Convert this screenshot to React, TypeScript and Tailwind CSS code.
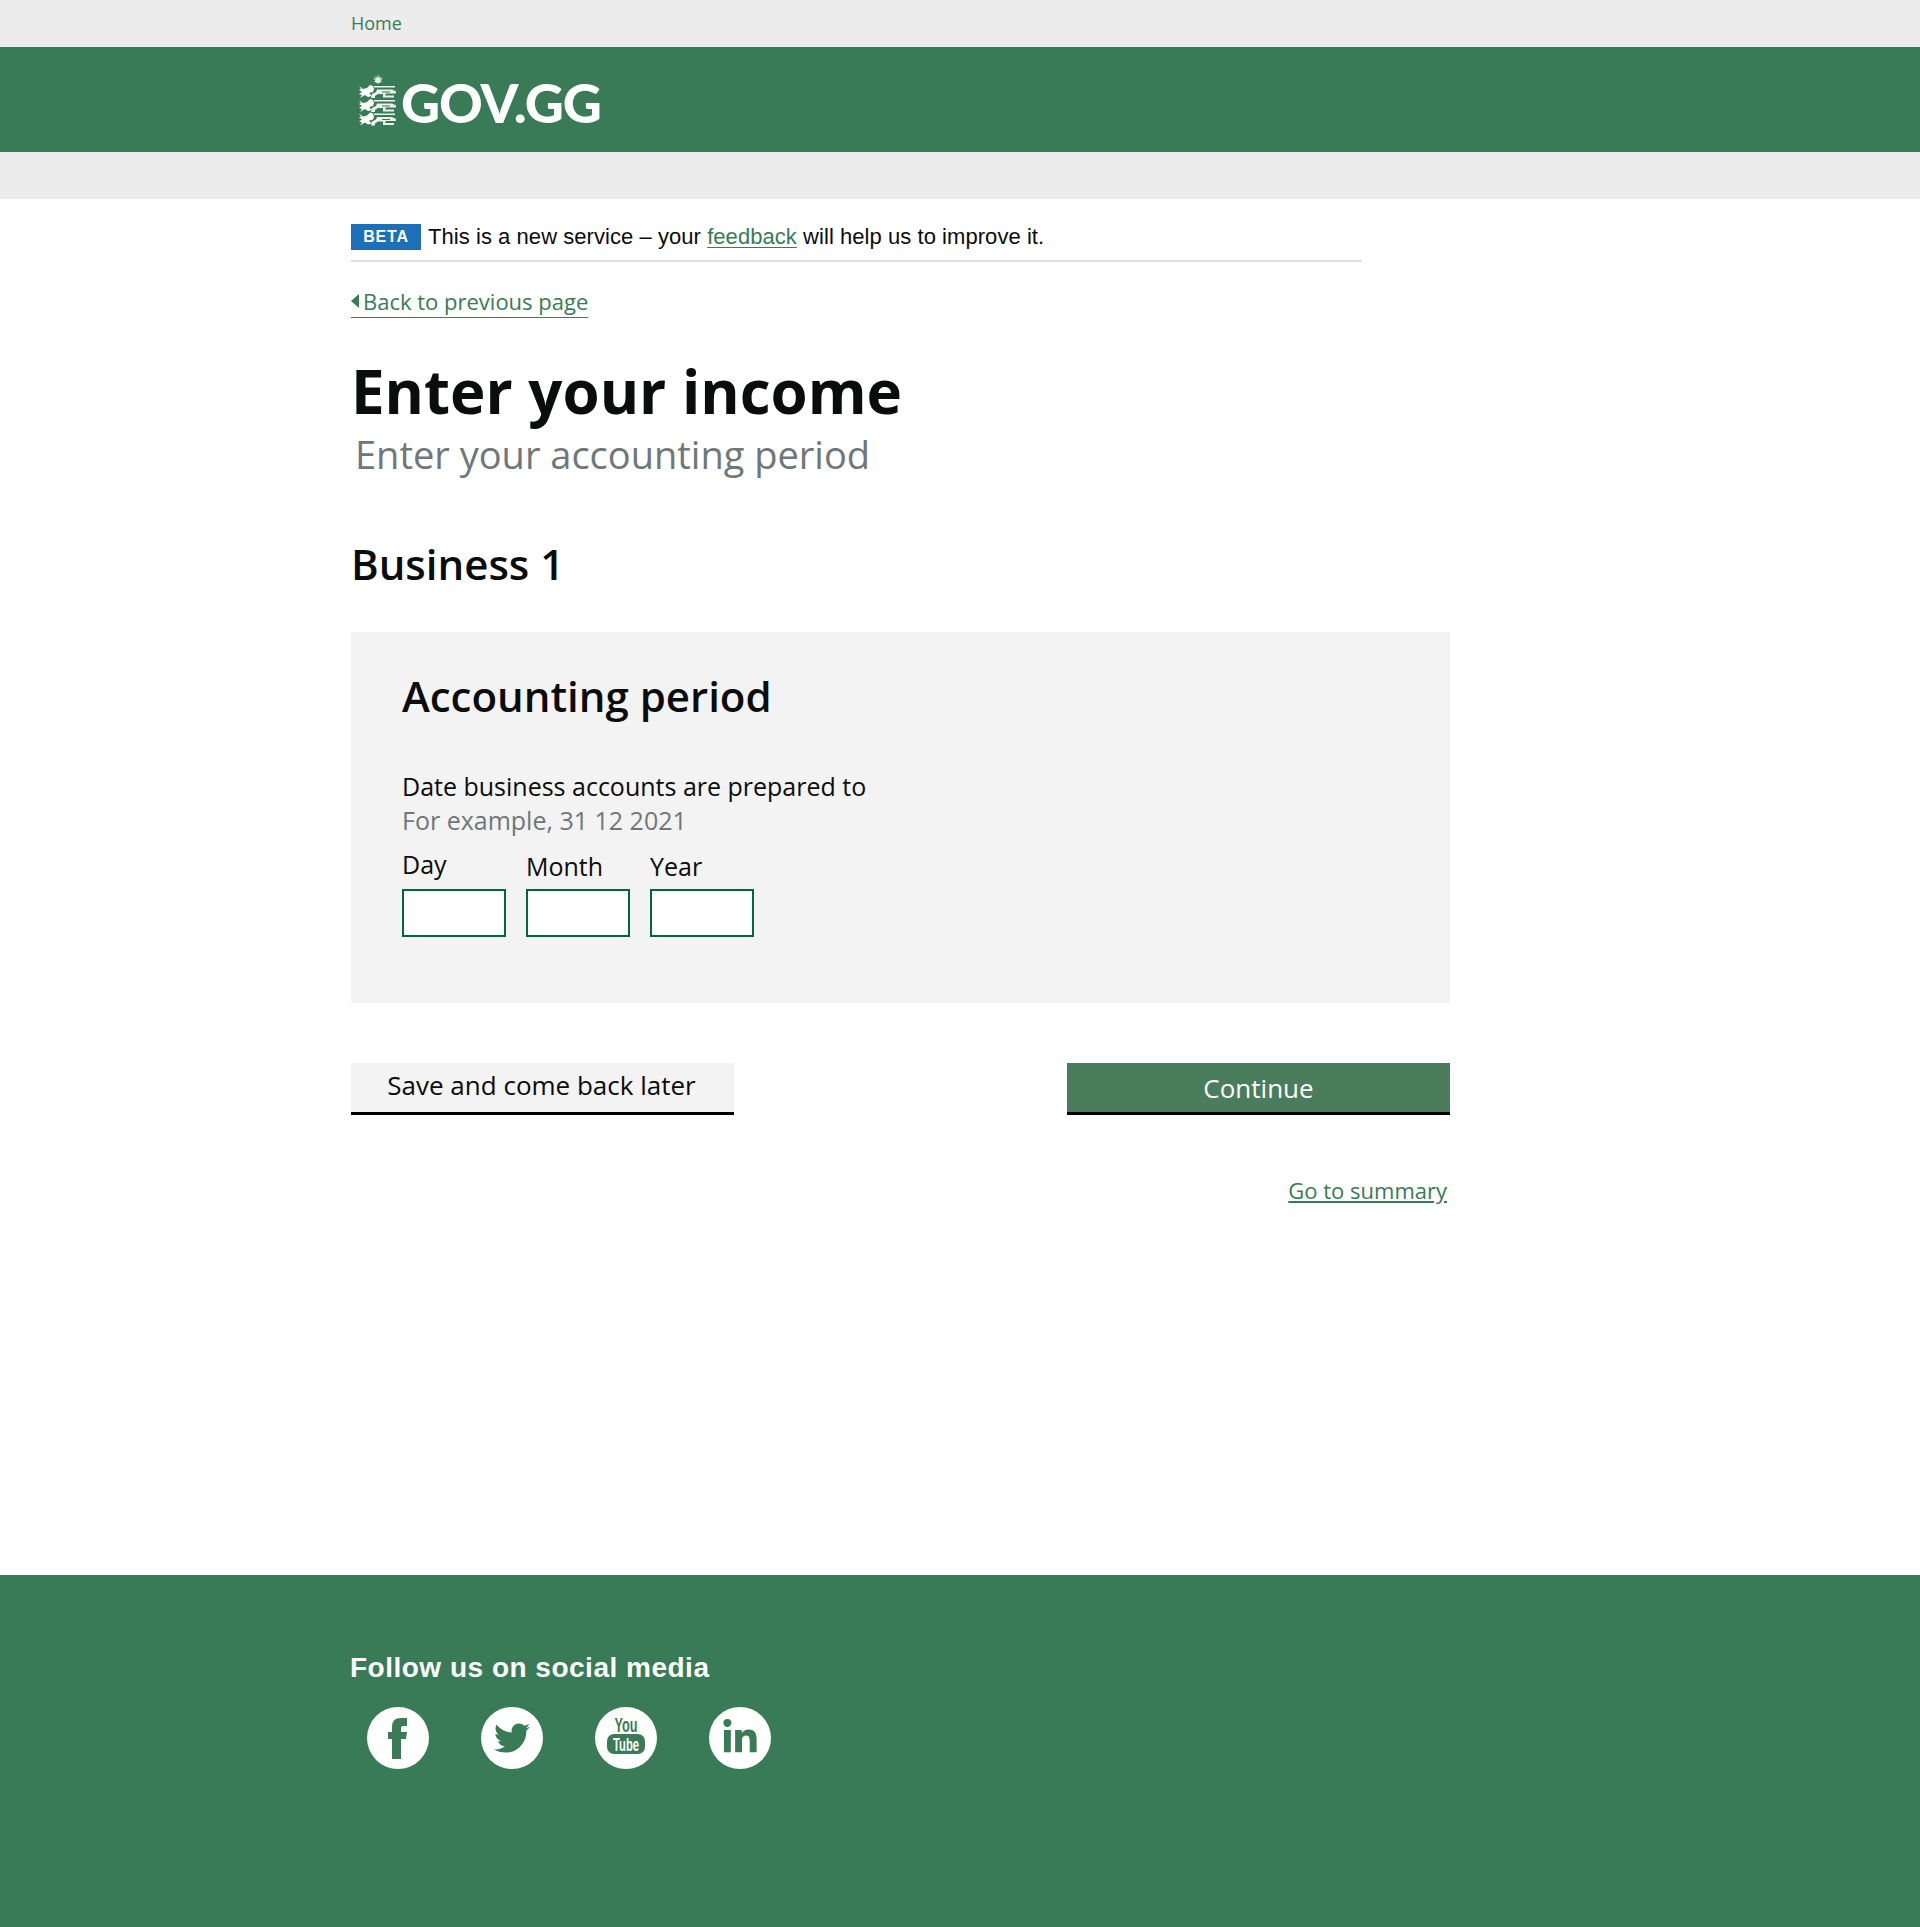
import { FaTwitter, FaLinkedinIn } from 'react-icons/fa';

// one lion of the crest, head on the left and body as thin bars
const Lion = ({ y }: { y: number }) => (
  <g transform={`translate(0 ${y})`}>
    <path d="M1 1l4 3 4-1 3-3 3 1 1 3-1 3-4 1 3 3-4 1-3-2-5 3 2-3-3-1 3-2-3-2 2-1z" fill="#fff" />
    <path d="M16 1h21v1.5H16zM19 4.5h15l4 2v2H28l-1 2h9v2H25V9h-5l-3 2v2h-4l1-4 4-2z" fill="#fff" opacity="0.9" />
    <path d="M24 6.5h8v1h-8z" fill="#387b56" />
  </g>
);

const Crest = () => (
  <svg width="40" height="52" viewBox="0 0 40 52" className="block" aria-hidden="true">
    <path d="M20 0l.8 4 2-2.500-.8 3.500 3-1.500-2.500 3.500 2 0-4 2.500h-1l-4-2.500 2 0-2.500-3.500 3 1.500-.8-3.500 2 2.500z" fill="#fff" opacity="0.85" />
    <Lion y={11} />
    <Lion y={25} />
    <Lion y={38.500} />
  </svg>
);

const SocialIcon = ({ children }: { children: React.ReactNode }) => (
  <a className="flex h-[62px] w-[62px] items-center justify-center rounded-full bg-white text-[#387b56]">
    {children}
  </a>
);

const DateField = ({ label, labelClass }: { label: string; labelClass: string }) => (
  <div className="w-[104px]">
    <label className={`block text-[25px] leading-[34px] text-[#0b0c0c] ${labelClass}`}>{label}</label>
    <input type="text" className="block h-[48px] w-[104px] border-2 border-[#00693c] bg-white" />
  </div>
);

const App = () => {
  return (
    <div className="flex min-h-screen flex-col bg-white font-['Open_Sans',sans-serif]">
      <div className="h-[47px] bg-[#ececec]">
        <div className="mx-auto w-[1218px] pt-[12px] text-[18px] leading-[22px] text-[#387b56]">Home</div>
      </div>

      <header className="h-[105px] bg-[#387b56]">
        <div className="mx-auto flex w-[1218px] items-center pl-[7px] pt-[26px]">
          <div className="-mt-[5px]">
            <Crest />
          </div>
          <span className="ml-[3px] mt-[2px] font-['Lato',sans-serif] text-[54px] font-black leading-[56px] tracking-[-1px] text-white">
            GOV.GG
          </span>
        </div>
      </header>
      <div className="h-[47px] bg-[#ececec]" />

      <main className="mx-auto w-[1218px] flex-1">
        <div className="w-[1011px] border-b-2 border-[#dcdcdc] pb-[10px] pt-[25px] font-['Liberation_Sans',sans-serif]">
          <div className="flex items-center">
            <span className="flex h-[26px] w-[70px] items-center justify-center bg-[#1d70b8] text-[16px] font-bold tracking-[0.8px] text-white">
              BETA
            </span>
            <p className="ml-[7px] text-[22px] leading-[26px] tracking-[0.055px] text-[#0b0c0c]">
              This is a new service – your <a className="text-[#387b56] underline underline-offset-[3px] [text-decoration-thickness:1px]">feedback</a> will help us to improve it.
            </p>
          </div>
        </div>

        <a className="mt-[23px] inline-flex items-center border-b border-[#387b56] text-[22px] leading-[32px] text-[#387b56]">
          <span className="mr-[4px] h-0 w-0 border-y-[7px] border-r-[8px] border-y-transparent border-r-[#387b56]" />
          Back to previous page
        </a>

        <h1 className="mt-[35px] text-[60px] font-bold leading-[76px] text-[#0b0c0c]">Enter your income</h1>
        <h2 className="ml-[4px] text-[38px] leading-[50px] text-[#6f777b]">Enter your accounting period</h2>
        <h2 className="mt-[57px] text-[42px] font-semibold leading-[56px] text-[#0b0c0c]">Business 1</h2>

        <section className="mt-[40px] h-[371px] w-[1099px] bg-[#f3f3f3] px-[51px] pt-[36px]">
          <h3 className="text-[42px] font-semibold leading-[56px] text-[#0b0c0c]">Accounting period</h3>
          <p className="mt-[45px] text-[25px] leading-[34px] text-[#0b0c0c]">Date business accounts are prepared to</p>
          <p className="text-[25px] leading-[34px] text-[#6f777b]">For example, 31 12 2021</p>
          <div className="mt-[11px] flex gap-[20px]">
            <DateField label="Day" labelClass="-mt-px mb-[8px]" />
            <DateField label="Month" labelClass="mt-px mb-[6px]" />
            <DateField label="Year" labelClass="mt-px mb-[6px]" />
          </div>
        </section>

        <div className="mt-[60px] flex w-[1099px] justify-between">
          <button className="h-[52px] w-[383px] border-b-[3px] border-black bg-[#f3f3f3] pb-[5px] pr-[2px] text-[26px] text-[#0b0c0c]">
            Save and come back later
          </button>
          <button className="h-[52px] w-[383px] border-b-[3px] border-black bg-[#4a7d5c] pt-[2px] text-[26px] text-white">
            Continue
          </button>
        </div>

        <div className="mt-[59px] flex w-[1096px] justify-end">
          <a className="text-[22px] leading-[32px] text-[#387b56] underline">Go to summary</a>
        </div>
      </main>

      <footer className="h-[352px] bg-[#387b56]">
        <div className="mx-auto w-[1218px] pt-[76px]">
          <h2 className="-ml-px font-['Liberation_Sans',sans-serif] text-[28px] font-bold leading-[34px] tracking-[0.5px] text-white">
            Follow us on social media
          </h2>
          <div className="ml-[16px] mt-[22px] flex gap-[52px]">
            <SocialIcon>
              <svg width="62" height="62" viewBox="0 0 62 62" aria-hidden="true">
                <path d="M34 52H25V32H21V25H25V20C25 14 28 11 34 11H40V19H36C34.500 19 34 20 34 21V25H40L39 32H34Z" fill="currentColor" />
              </svg>
            </SocialIcon>
            <SocialIcon>
              <FaTwitter size={36} />
            </SocialIcon>
            <SocialIcon>
              <svg width="62" height="62" viewBox="0 0 62 62" aria-hidden="true">
                <rect x="12" y="27" width="38" height="20" rx="7" fill="currentColor" />
                <text x="31" y="25" textAnchor="middle" textLength="23" lengthAdjust="spacingAndGlyphs" fontFamily="Liberation Sans" fontWeight="700" fontSize="20" fill="currentColor">You</text>
                <text x="31" y="44" textAnchor="middle" textLength="26" lengthAdjust="spacingAndGlyphs" fontFamily="Liberation Sans" fontWeight="700" fontSize="18" fill="#fff">Tube</text>
              </svg>
            </SocialIcon>
            <SocialIcon>
              <FaLinkedinIn size={38} />
            </SocialIcon>
          </div>
        </div>
      </footer>
    </div>
  );
};

export default App;
